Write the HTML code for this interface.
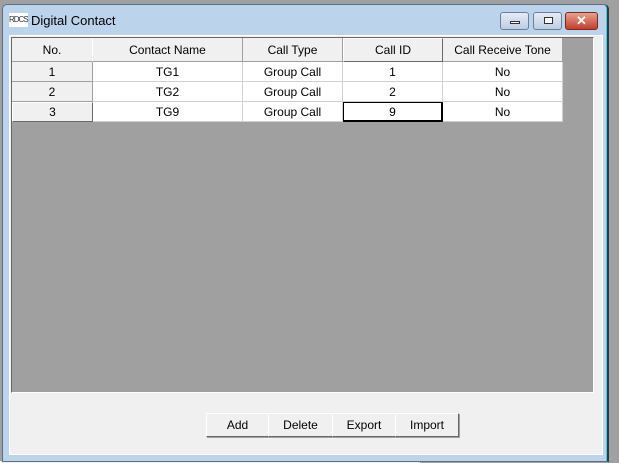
<!DOCTYPE html><html><head><style>
body{margin:0;width:619px;height:463px;background:#a0a0a0;position:relative;overflow:hidden;font-family:"Liberation Sans",sans-serif;}
.a{position:absolute;box-sizing:border-box}
.c{position:absolute;box-sizing:border-box;display:flex;align-items:center;justify-content:center;font-size:12px;color:#000}
.h{background:#f0f0f0;border-right:1px solid #a0a0a0;border-bottom:1px solid #a0a0a0}
.w{background:#fff;border-right:1px solid #d0d0d0;border-bottom:1px solid #d0d0d0}
.b{position:absolute;top:413px;height:22px;background:#f0f0f0;border:1px solid;border-color:#fff #696969 #696969 #fff;box-shadow:1px 1px 0 #a0a0a0;display:flex;align-items:center;justify-content:center;font-size:12px}
.tb{position:absolute;top:12px;height:18px;border:1px solid #6d7f99;border-radius:3px;background:linear-gradient(#e4ecf6,#bccde4);box-sizing:border-box}
</style></head><body>
<div class="a" style="left:0;top:461px;width:420px;height:2px;background:#f0f0f0"></div>
<div class="a" style="left:2px;top:4px;width:607px;height:458px;background:#bcd3ec;border:1px solid #5a6f89;border-radius:5px 5px 0 0;border-right:2px solid #2a3a4a;box-shadow:inset -1px 0 0 #3fd0e0"></div>
<div class="a" style="left:9px;top:13px;width:19px;height:14px;background:#fff;font-size:8px;line-height:14px;color:#333;letter-spacing:-1px">RDCS</div>
<div class="a" style="left:31px;top:13px;font-size:13px;color:#000">Digital Contact</div>
<div class="tb" style="left:500px;width:29px"><div class="a" style="left:9px;top:8px;width:10px;height:3px;background:#fff;border:1px solid #333"></div></div>
<div class="tb" style="left:533px;width:29px"><div class="a" style="left:10px;top:4px;width:9px;height:7px;border:1px solid #333;background:#fff"></div></div>
<div class="tb" style="left:565px;width:33px;background:linear-gradient(#e8a090,#c0402a);border-color:#7a2a20;color:#fff;font-weight:bold;font-size:13px;text-align:center;line-height:16px">✕</div>
<div class="a" style="left:9px;top:35px;width:594px;height:420px;background:#f0f0f0;border:1px solid #fff"></div>
<div class="a" style="left:11px;top:37px;width:583px;height:356px;background:#a0a0a0;border-left:1px solid #696969;border-top:1px solid #696969;border-bottom:1px solid #fff;border-right:1px solid #fff"></div>
<div class="c h" style="left:12px;top:38px;width:81px;height:24px;border-right-color:#fff">No.</div>
<div class="c h" style="left:93px;top:38px;width:150px;height:24px">Contact Name</div>
<div class="c h" style="left:243px;top:38px;width:100px;height:24px">Call Type</div>
<div class="c h" style="left:343px;top:38px;width:100px;height:24px;border:1px solid;border-color:#fff #696969 #696969 #fff">Call ID</div>
<div class="c h" style="left:443px;top:38px;width:120px;height:24px">Call Receive Tone</div>
<div class="c h" style="left:12px;top:62px;width:81px;height:20px">1</div>
<div class="c w" style="left:93px;top:62px;width:150px;height:20px">TG1</div>
<div class="c w" style="left:243px;top:62px;width:100px;height:20px">Group Call</div>
<div class="c w" style="left:343px;top:62px;width:100px;height:20px">1</div>
<div class="c w" style="left:443px;top:62px;width:120px;height:20px">No</div>
<div class="c h" style="left:12px;top:82px;width:81px;height:20px">2</div>
<div class="c w" style="left:93px;top:82px;width:150px;height:20px">TG2</div>
<div class="c w" style="left:243px;top:82px;width:100px;height:20px">Group Call</div>
<div class="c w" style="left:343px;top:82px;width:100px;height:20px">2</div>
<div class="c w" style="left:443px;top:82px;width:120px;height:20px">No</div>
<div class="c h" style="left:12px;top:102px;width:81px;height:20px;border:1px solid;border-color:#fff #696969 #696969 #fff">3</div>
<div class="c w" style="left:93px;top:102px;width:150px;height:20px">TG9</div>
<div class="c w" style="left:243px;top:102px;width:100px;height:20px">Group Call</div>
<div class="c w" style="left:343px;top:102px;width:100px;height:20px;border:1px solid #000;border-width:1px 2px 2px 1px">9</div>
<div class="c w" style="left:443px;top:102px;width:120px;height:20px">No</div>
<div class="b" style="left:206px;width:61px">Add</div>
<div class="b" style="left:268px;width:63px">Delete</div>
<div class="b" style="left:332px;width:62px">Export</div>
<div class="b" style="left:395px;width:62px">Import</div>
</body></html>
